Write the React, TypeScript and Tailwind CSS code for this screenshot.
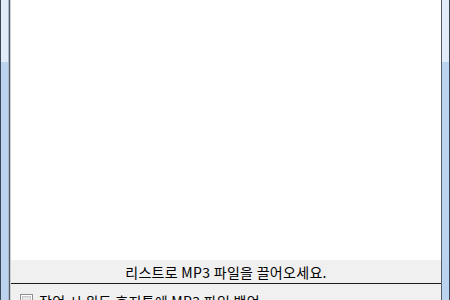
export default function App() {
  const font = { fontFamily: '"Noto Sans CJK KR", "Noto Sans", sans-serif' };

  return (
    <div className="w-[450px] h-[300px] overflow-hidden flex bg-white" style={font}>
      {/* left window frame */}
      <div className="flex h-full">
        <div className="w-px bg-[#3c4756]" />
        <div className="w-[7px] flex flex-col">
          <div className="h-[62px] bg-[#e2ecf9]" />
          <div className="flex-1 bg-[#bcd3f0]" />
        </div>
        <div className="w-px bg-[#a9b8cb]" />
        <div className="w-px bg-[#545b63]" />
        <div className="w-px bg-[#c9ced6]" />
      </div>

      {/* client area */}
      <div className="flex-1 flex flex-col min-w-0">
        {/* file list */}
        <div className="h-[260px] bg-white shrink-0" />

        {/* drop hint */}
        <div className="h-[23px] shrink-0 bg-[#f0f0f0] flex items-center justify-center text-[14px] tracking-[0.3px] leading-none text-black">
          리스트로 MP3 파일을 끌어오세요.
        </div>
        <div className="h-px shrink-0 bg-[#1a1a1a]" />

        {/* options */}
        <div className="flex-1 bg-[#f0f0f0] pt-[9px] pl-[9px] flex items-start gap-[6px]">
          <div className="w-[13px] h-[13px] shrink-0 mt-[1px] border border-[#8e8f8f] bg-white p-px">
            <div className="w-full h-full bg-[#e6e6e6] border border-[#c8c8c8]" />
          </div>
          <span className="text-[14px] tracking-[0.3px] leading-[16px] text-black whitespace-nowrap">
            작업 시 윈도 휴지통에 MP3 파일 백업
          </span>
        </div>
      </div>

      {/* right window frame */}
      <div className="flex h-full">
        <div className="w-px bg-[#545b63]" />
        <div className="w-[7px] flex flex-col">
          <div className="h-[62px] bg-[#e2ecf9]" />
          <div className="flex-1 bg-[#bcd3f0]" />
        </div>
        <div className="w-px bg-[#3c4756]" />
      </div>
    </div>
  );
}
